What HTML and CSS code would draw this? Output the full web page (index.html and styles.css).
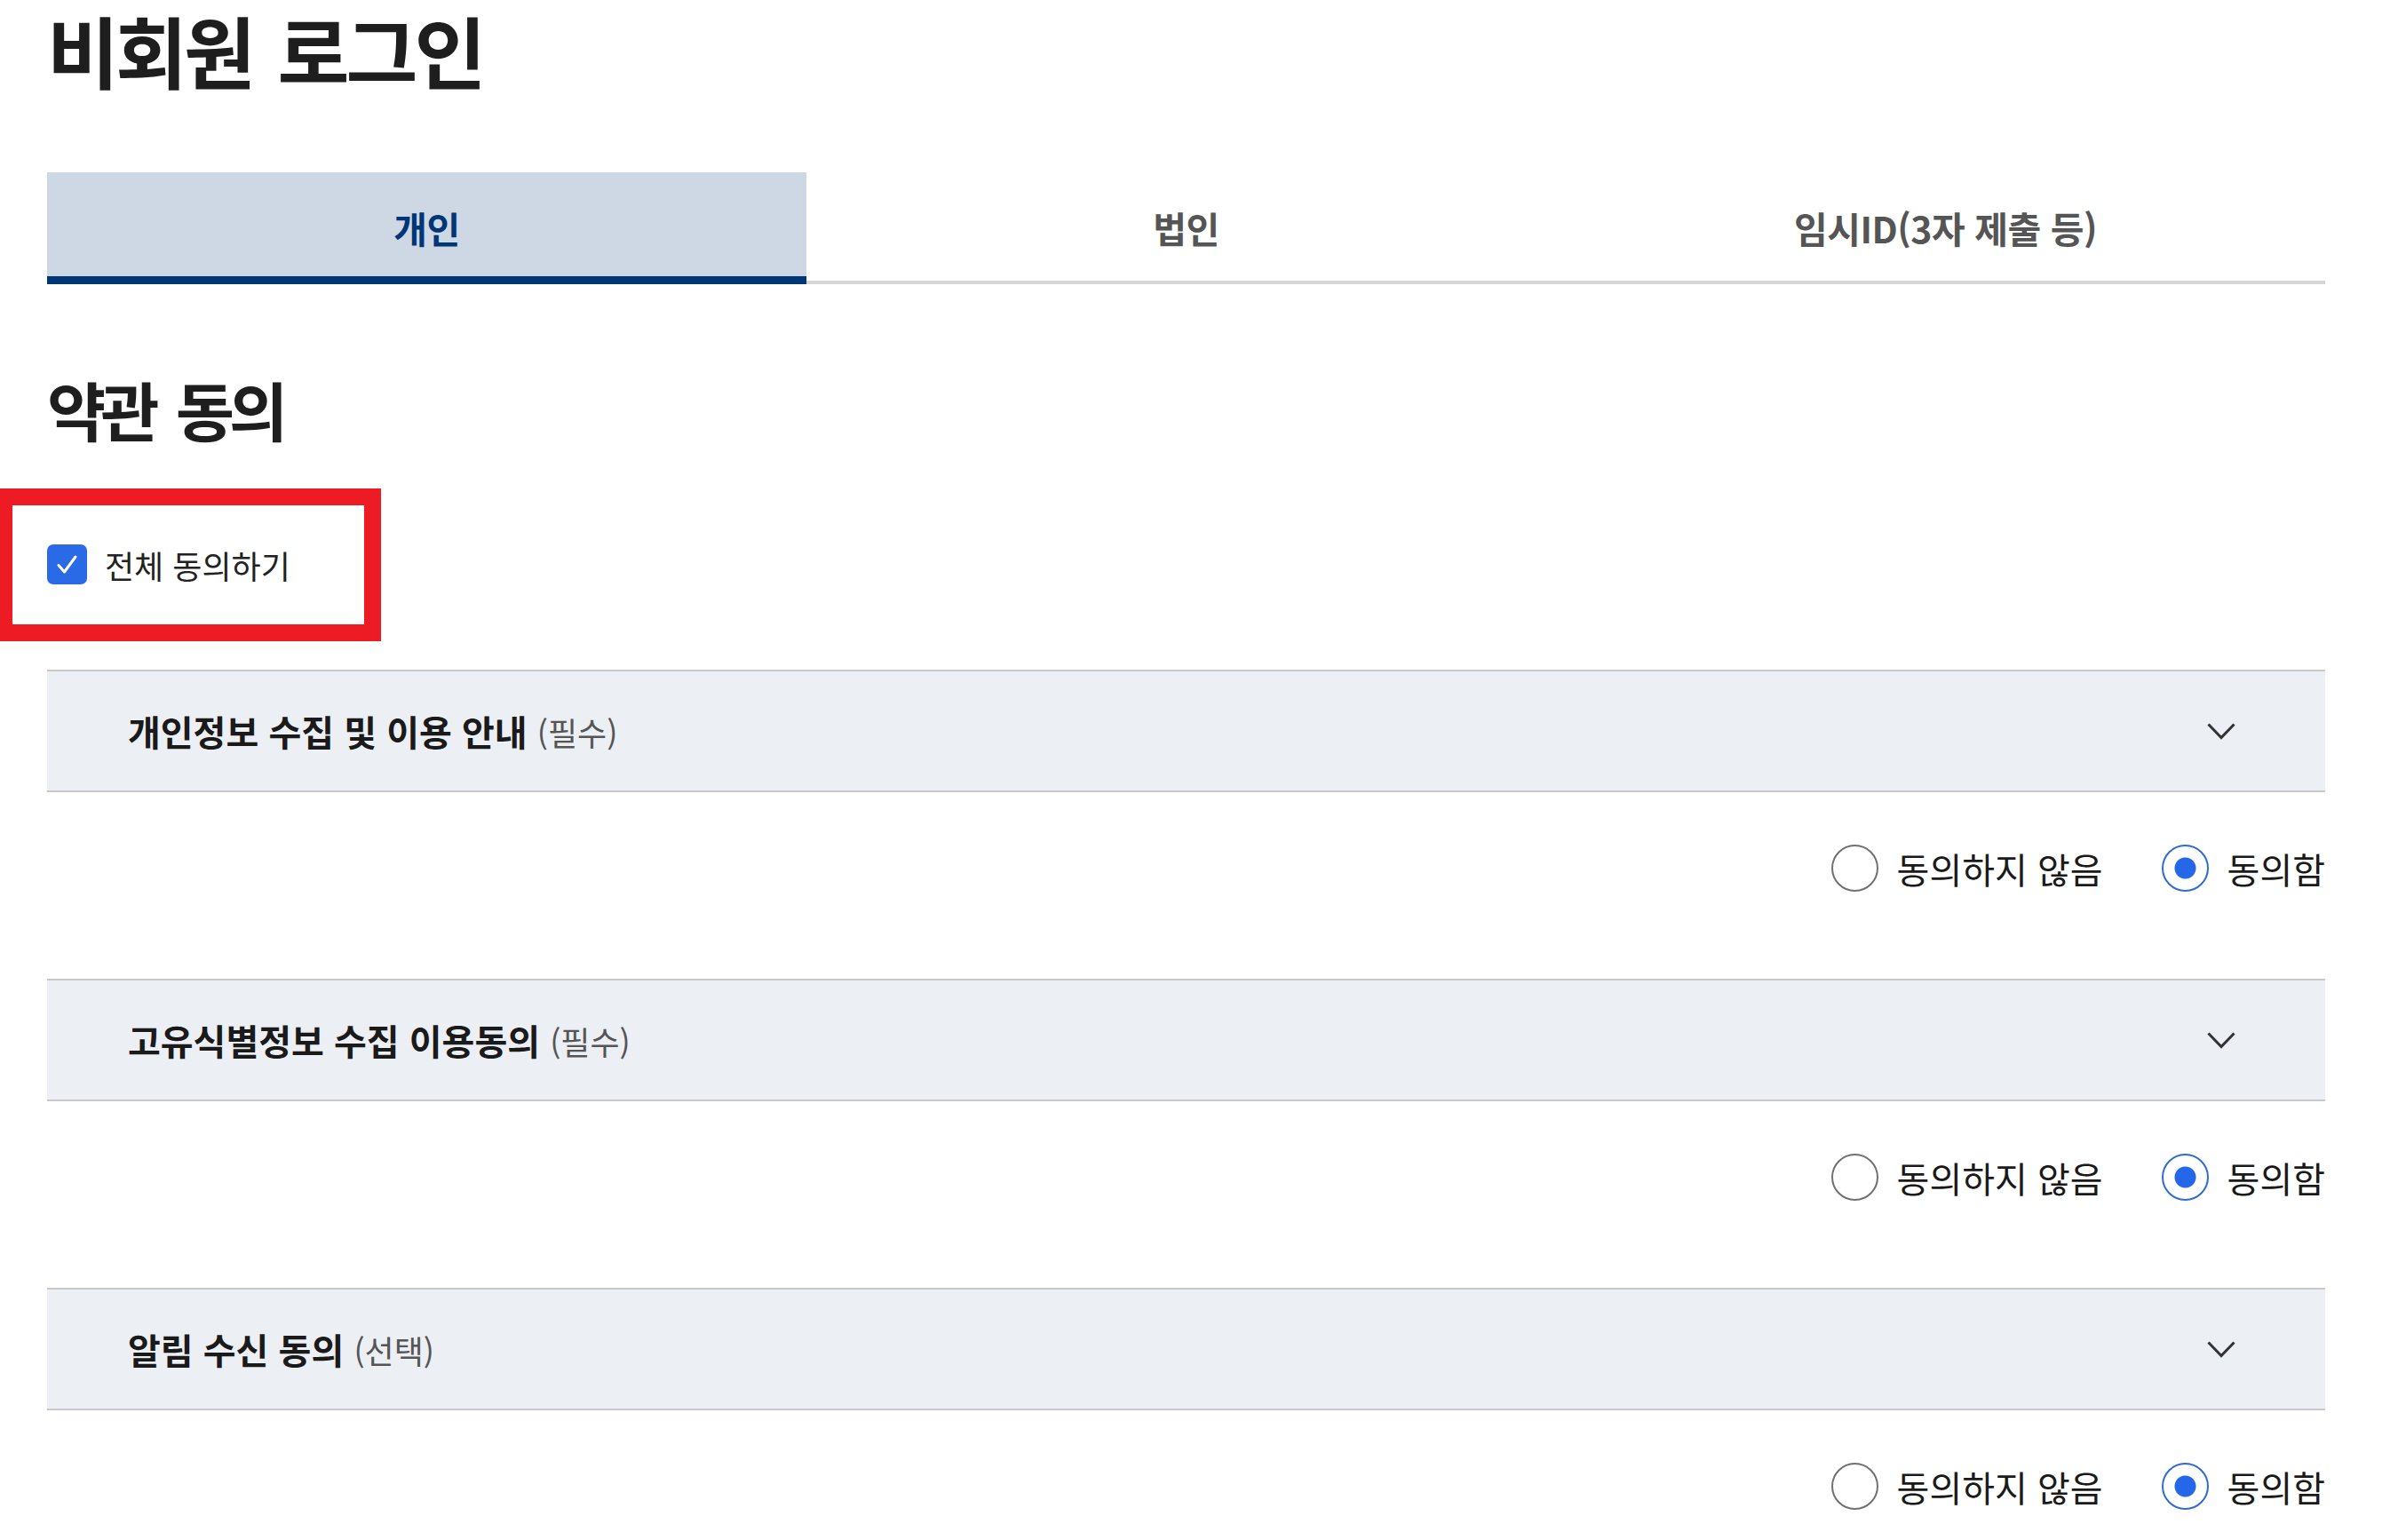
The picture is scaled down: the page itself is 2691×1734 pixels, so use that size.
FILE: index.html
```html
<!DOCTYPE html>
<html lang="ko">
<head>
<meta charset="utf-8">
<title>비회원 로그인</title>
<link rel="stylesheet" href="styles.css">
</head>
<body>
<main class="page">
  <h1 class="page-title">비회원 로그인</h1>

  <nav class="tabs">
    <a class="tab is-active">개인</a>
    <a class="tab">법인</a>
    <a class="tab">임시ID(3자 제출 등)</a>
  </nav>

  <h2 class="section-title">약관 동의</h2>

  <label class="agree-all">
    <span class="check-box">
      <svg viewBox="0 0 45 45" width="45" height="45"><path d="M13 23.5 L19.5 31 L32 14" fill="none" stroke="#fff" stroke-width="3" stroke-linecap="round" stroke-linejoin="round"/></svg>
    </span>
    <span class="agree-all-text">전체 동의하기</span>
    <span class="highlight-box"></span>
  </label>

  <div class="terms">
    <section class="term">
      <div class="term-head">
        <h3 class="term-title">개인정보 수집 및 이용 안내 <span class="term-tag">(필수)</span></h3>
        <svg class="chevron" viewBox="0 0 32 19" width="32" height="19"><path d="M1.5 1.5 L16 16.5 L30.5 1.5" fill="none" stroke="#333" stroke-width="3"/></svg>
      </div>
      <div class="term-choice">
        <label class="choice"><span class="radio"></span><span class="choice-text">동의하지 않음</span></label>
        <label class="choice"><span class="radio is-checked"></span><span class="choice-text">동의함</span></label>
      </div>
    </section>

    <section class="term">
      <div class="term-head">
        <h3 class="term-title">고유식별정보 수집 이용동의 <span class="term-tag">(필수)</span></h3>
        <svg class="chevron" viewBox="0 0 32 19" width="32" height="19"><path d="M1.5 1.5 L16 16.5 L30.5 1.5" fill="none" stroke="#333" stroke-width="3"/></svg>
      </div>
      <div class="term-choice">
        <label class="choice"><span class="radio"></span><span class="choice-text">동의하지 않음</span></label>
        <label class="choice"><span class="radio is-checked"></span><span class="choice-text">동의함</span></label>
      </div>
    </section>

    <section class="term">
      <div class="term-head">
        <h3 class="term-title">알림 수신 동의 <span class="term-tag">(선택)</span></h3>
        <svg class="chevron" viewBox="0 0 32 19" width="32" height="19"><path d="M1.5 1.5 L16 16.5 L30.5 1.5" fill="none" stroke="#333" stroke-width="3"/></svg>
      </div>
      <div class="term-choice">
        <label class="choice"><span class="radio"></span><span class="choice-text">동의하지 않음</span></label>
        <label class="choice"><span class="radio is-checked"></span><span class="choice-text">동의함</span></label>
      </div>
    </section>
  </div>
</main>
</body>
</html>
```

FILE: styles.css
```css
* { box-sizing: border-box; }

html, body {
  margin: 0;
  padding: 0;
  background: #fff;
}

body {
  font-family: "Noto Sans CJK KR", "Noto Sans", sans-serif;
  color: #1e1e1e;
  overflow: hidden;
}

.page {
  padding: 0 73px 0 53px;
}

.page-title {
  margin: 0;
  padding-top: 2px;
  font-size: 88px;
  line-height: 106px;
  font-weight: 700;
  letter-spacing: -4px;
  word-spacing: 8px;
  color: #1e1e1e;
}

.tabs {
  margin-top: 86px;
  display: grid;
  grid-template-columns: repeat(3, 1fr);
  box-shadow: inset 0 -4px 0 #d6d6d6;
}

.tab {
  height: 126px;
  padding-top: 42px;
  text-align: center;
  font-size: 41px;
  line-height: 1;
  font-weight: 700;
  letter-spacing: -0.5px;
  color: #555;
}

.tab.is-active {
  background: #cdd8e4;
  color: #003675;
  border-bottom: 9px solid #003675;
}

.section-title {
  margin: 104px 0 0;
  font-size: 72px;
  line-height: 1;
  font-weight: 700;
  letter-spacing: -6px;
  word-spacing: 10px;
  color: #1e1e1e;
}

.agree-all {
  position: relative;
  margin-top: 117px;
  display: flex;
  align-items: center;
  gap: 20px;
  height: 45px;
}

.check-box {
  width: 45px;
  height: 45px;
  border-radius: 7px;
  background: #2a6ae6;
  display: block;
}

.check-box svg { display: block; }

.agree-all-text {
  font-size: 36px;
  line-height: 1;
  letter-spacing: 0;
  color: #222;
}

.highlight-box {
  position: absolute;
  left: -58px;
  top: -63px;
  width: 434px;
  height: 172px;
  border: 19px solid #ed1c24;
}

.terms {
  margin-top: 96px;
}

.term-head {
  height: 138px;
  background: #eceff4;
  border-top: 2px solid #c8c8c8;
  border-bottom: 2px solid #c8c8c8;
  display: flex;
  align-items: center;
  justify-content: space-between;
  padding: 0 101px 0 91px;
}

.term-title {
  margin: 0;
  font-size: 40px;
  line-height: 1;
  font-weight: 700;
  letter-spacing: 0;
  word-spacing: 0;
  color: #1a1a1a;
}

.term-tag {
  font-size: 36px;
  font-weight: 400;
  letter-spacing: 0;
  color: #555;
}

.chevron { display: block; }

.term-choice {
  height: 210px;
  padding-top: 59px;
  display: flex;
  justify-content: flex-end;
  gap: 66px;
}

.choice {
  display: flex;
  align-items: center;
  gap: 21px;
  height: 53px;
}

.radio {
  width: 53px;
  height: 53px;
  border-radius: 50%;
  border: 2px solid #707070;
  background: #fff;
}

.radio.is-checked {
  border-color: #2f6bd0;
  background: radial-gradient(circle, #2467e8 0 11.5px, #fff 12.5px);
}

.choice-text {
  font-size: 40px;
  line-height: 1;
  letter-spacing: 0;
  color: #1a1a1a;
}
```
